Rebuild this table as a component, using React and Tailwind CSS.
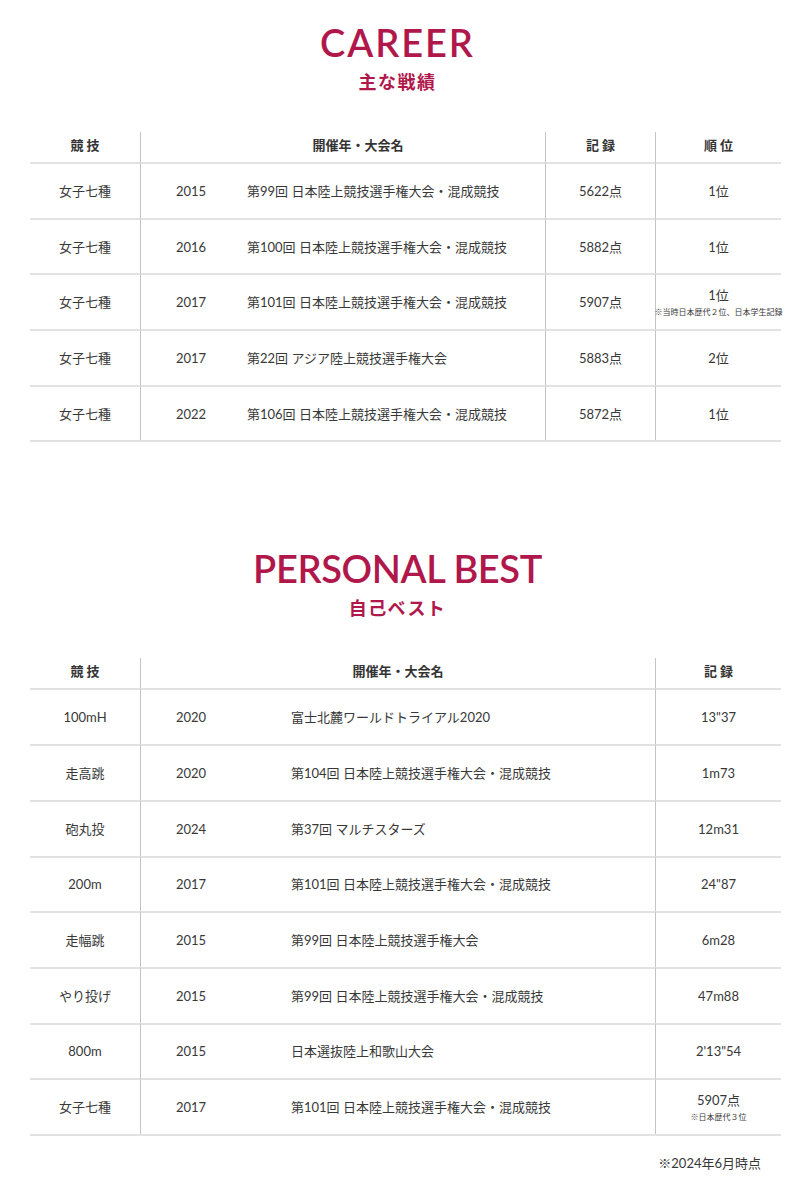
import React from 'react';

const career = [
  { event: '女子七種', year: '2015', name: '第99回 日本陸上競技選手権大会・混成競技', record: '5622点', rank: '1位' },
  { event: '女子七種', year: '2016', name: '第100回 日本陸上競技選手権大会・混成競技', record: '5882点', rank: '1位' },
  { event: '女子七種', year: '2017', name: '第101回 日本陸上競技選手権大会・混成競技', record: '5907点', rank: '1位', note: '※当時日本歴代２位、日本学生記録' },
  { event: '女子七種', year: '2017', name: '第22回 アジア陸上競技選手権大会', record: '5883点', rank: '2位' },
  { event: '女子七種', year: '2022', name: '第106回 日本陸上競技選手権大会・混成競技', record: '5872点', rank: '1位' },
];

const best = [
  { event: '100mH', year: '2020', name: '富士北麓ワールドトライアル2020', record: '13"37' },
  { event: '走高跳', year: '2020', name: '第104回 日本陸上競技選手権大会・混成競技', record: '1m73' },
  { event: '砲丸投', year: '2024', name: '第37回 マルチスターズ', record: '12m31' },
  { event: '200m', year: '2017', name: '第101回 日本陸上競技選手権大会・混成競技', record: '24"87' },
  { event: '走幅跳', year: '2015', name: '第99回 日本陸上競技選手権大会', record: '6m28' },
  { event: 'やり投げ', year: '2015', name: '第99回 日本陸上競技選手権大会・混成競技', record: '47m88' },
  { event: '800m', year: '2015', name: '日本選抜陸上和歌山大会', record: "2'13\"54" },
  { event: '女子七種', year: '2017', name: '第101回 日本陸上競技選手権大会・混成競技', record: '5907点', note: '※日本歴代３位' },
];

function Heading({ en, ja, track }) {
  return (
    <div className="flex flex-col items-center">
      <h2 className={'text-[38px] leading-[38px] font-semibold text-[#b0184b] ' + track}>{en}</h2>
      <p className="mt-[9px] text-[18px] leading-[24px] font-bold tracking-[0.08em] text-[#b0184b]">{ja}</p>
    </div>
  );
}

function Th({ a, b, line, extra = '' }) {
  return (
    <div className={'h-[30px] pt-[3px] flex items-start justify-center text-[13px] leading-[20px] font-bold text-[#333]' + (line ? ' border-l border-[#c4c4c4]' : '') + ' ' + extra}>
      {b ? (<><span className="mr-[3px]">{a}</span><span>{b}</span></>) : a}
    </div>
  );
}

const td = 'h-[55.7px] flex items-center border-t-2 border-[#e2e2e2]';
const tdl = td + ' border-l border-l-[#c4c4c4]';

export default function App() {
  return (
    <div className="w-[795px] bg-white text-[#383838] pb-[20px]" style={{ fontFamily: 'Lato, "Noto Sans CJK JP", sans-serif' }}>
      <div className="pt-[23px]">
        <Heading en="CAREER" ja="主な戦績" track="tracking-[0.05em]" />
      </div>

      <div className="ml-[30px] w-[751px] mt-[38px] grid grid-cols-[110px_405px_110px_126px] border-b-2 border-[#e2e2e2] text-[13px] leading-[20px]">
        <Th a="競" b="技" />
        <Th a="開催年・大会名" line extra="pl-[30px]" />
        <Th a="記" b="録" line />
        <Th a="順" b="位" line />
        {career.map((r, i) => (
          <React.Fragment key={i}>
            <div className={td + ' justify-center'}>{r.event}</div>
            <div className={tdl + ' pl-[35px]'}>
              <span className="w-[71px]">{r.year}</span>
              <span>{r.name}</span>
            </div>
            <div className={tdl + ' justify-center'}>{r.record}</div>
            <div className={tdl + ' flex-col justify-center'}>
              <span>{r.rank}</span>
              {r.note && <span className="text-[8px] leading-[14px] whitespace-nowrap">{r.note}</span>}
            </div>
          </React.Fragment>
        ))}
      </div>

      <div className="pt-[107px]">
        <Heading en="PERSONAL BEST" ja="自己ベスト" track="tracking-[-0.01em]" />
      </div>

      <div className="ml-[30px] w-[751px] mt-[38px] grid grid-cols-[110px_515px_126px] border-b-2 border-[#e2e2e2] text-[13px] leading-[20px]">
        <Th a="競" b="技" />
        <Th a="開催年・大会名" line />
        <Th a="記" b="録" line />
        {best.map((r, i) => (
          <React.Fragment key={i}>
            <div className={td + ' justify-center'}>{r.event}</div>
            <div className={tdl + ' pl-[35px]'}>
              <span className="w-[115px]">{r.year}</span>
              <span>{r.name}</span>
            </div>
            <div className={tdl + ' flex-col justify-center'}>
              <span>{r.record}</span>
              {r.note && <span className="text-[8px] leading-[14px] whitespace-nowrap">{r.note}</span>}
            </div>
          </React.Fragment>
        ))}
      </div>

      <p className="ml-[30px] w-[751px] mt-[17px] pr-[20px] text-right text-[13px] leading-[20px]">※2024年6月時点</p>
    </div>
  );
}
